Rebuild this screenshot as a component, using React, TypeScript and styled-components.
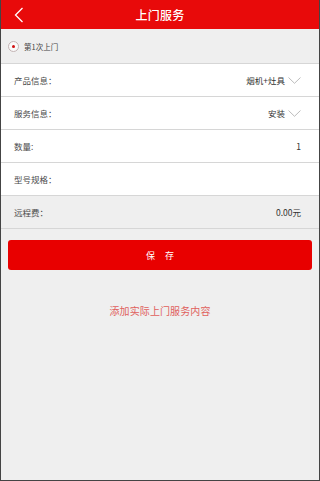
import React from "react";
import styled, { createGlobalStyle } from "styled-components";

const Global = createGlobalStyle`
  html, body { margin: 0; padding: 0; background: #efefef; }
  * { box-sizing: border-box; }
  body { font-family: "Noto Sans CJK SC", "Noto Sans", sans-serif; }
`;

const Screen = styled.div`
  min-height: 481px;
  background: #efefef;
  border-left: 1px solid #444;
  border-right: 1px solid #444;
  border-bottom: 1px solid #444;
  display: flex;
  flex-direction: column;
`;

const Header = styled.div`
  height: 29px;
  background: #e80a0a;
  display: flex;
  align-items: center;
  justify-content: center;
  position: relative;
`;

const Title = styled.div`
  color: #fff;
  font-size: 12px;
  font-weight: 500;
  letter-spacing: 0.3px;
`;

const Back = styled.div`
  position: absolute;
  left: 12px;
  top: 7px;
  width: 12px;
  height: 16px;
  display: flex;
`;

const RadioRow = styled.div`
  height: 35px;
  display: flex;
  align-items: center;
  padding-left: 7px;
  gap: 5px;
  border-bottom: 1px solid #d6d6d6;
`;

const Radio = styled.div`
  width: 11px;
  height: 11px;
  border-radius: 50%;
  border: 1px solid #c4b4b4;
  background: #fafafa;
  display: flex;
  align-items: center;
  justify-content: center;
  &::after {
    content: "";
    width: 3px;
    height: 3px;
    border-radius: 50%;
    background: #d01010;
  }
`;

const Small = styled.span`
  font-size: 7.5px;
  color: #444;
`;

const Row = styled.div<{ $gray?: boolean }>`
  height: 33px;
  display: flex;
  align-items: center;
  justify-content: space-between;
  padding: 0 18px 0 13px;
  background: ${(p) => (p.$gray ? "#efefef" : "#fff")};
  border-bottom: 1px solid #d6d6d6;
`;

const Label = styled.span`
  font-size: 8.5px;
  color: #4a4a4a;
`;

const Value = styled.span`
  display: flex;
  align-items: center;
  gap: 3px;
  font-size: 8.5px;
  color: #333;
`;

const Button = styled.div`
  margin: 11px 7px 0;
  height: 30px;
  border-radius: 3px;
  background: #e80000;
  color: #fff;
  font-size: 9px;
  display: flex;
  align-items: center;
  justify-content: center;
  letter-spacing: 10px;
  padding-left: 10px;
`;

const Link = styled.div`
  margin-top: 33px;
  text-align: center;
  font-size: 10px;
  color: #e0605c;
  letter-spacing: 0.1px;
`;

const Chevron = () => (
  <svg width="13" height="7" viewBox="0 0 13 7">
    <polyline points="0.5,0.5 6.5,6.3 12.5,0.5" fill="none" stroke="#b4b4b4" strokeWidth="0.9" />
  </svg>
);

export default function App() {
  return (
    <>
      <Global />
      <Screen>
        <Header>
          <Back>
            <svg width="12" height="16" viewBox="0 0 12 16">
              <polyline points="9.5,1 2.5,8 9.5,15" fill="none" stroke="#fff" strokeWidth="1.3" />
            </svg>
          </Back>
          <Title>上门服务</Title>
        </Header>
        <RadioRow>
          <Radio />
          <Small>第1次上门</Small>
        </RadioRow>
        <Row>
          <Label>产品信息：</Label>
          <Value>烟机+灶具<Chevron /></Value>
        </Row>
        <Row>
          <Label>服务信息：</Label>
          <Value>安装<Chevron /></Value>
        </Row>
        <Row>
          <Label>数量:</Label>
          <Value>1</Value>
        </Row>
        <Row>
          <Label>型号规格：</Label>
          <Value></Value>
        </Row>
        <Row $gray>
          <Label>远程费：</Label>
          <Value>0.00元</Value>
        </Row>
        <Button>保存</Button>
        <Link>添加实际上门服务内容</Link>
      </Screen>
    </>
  );
}
